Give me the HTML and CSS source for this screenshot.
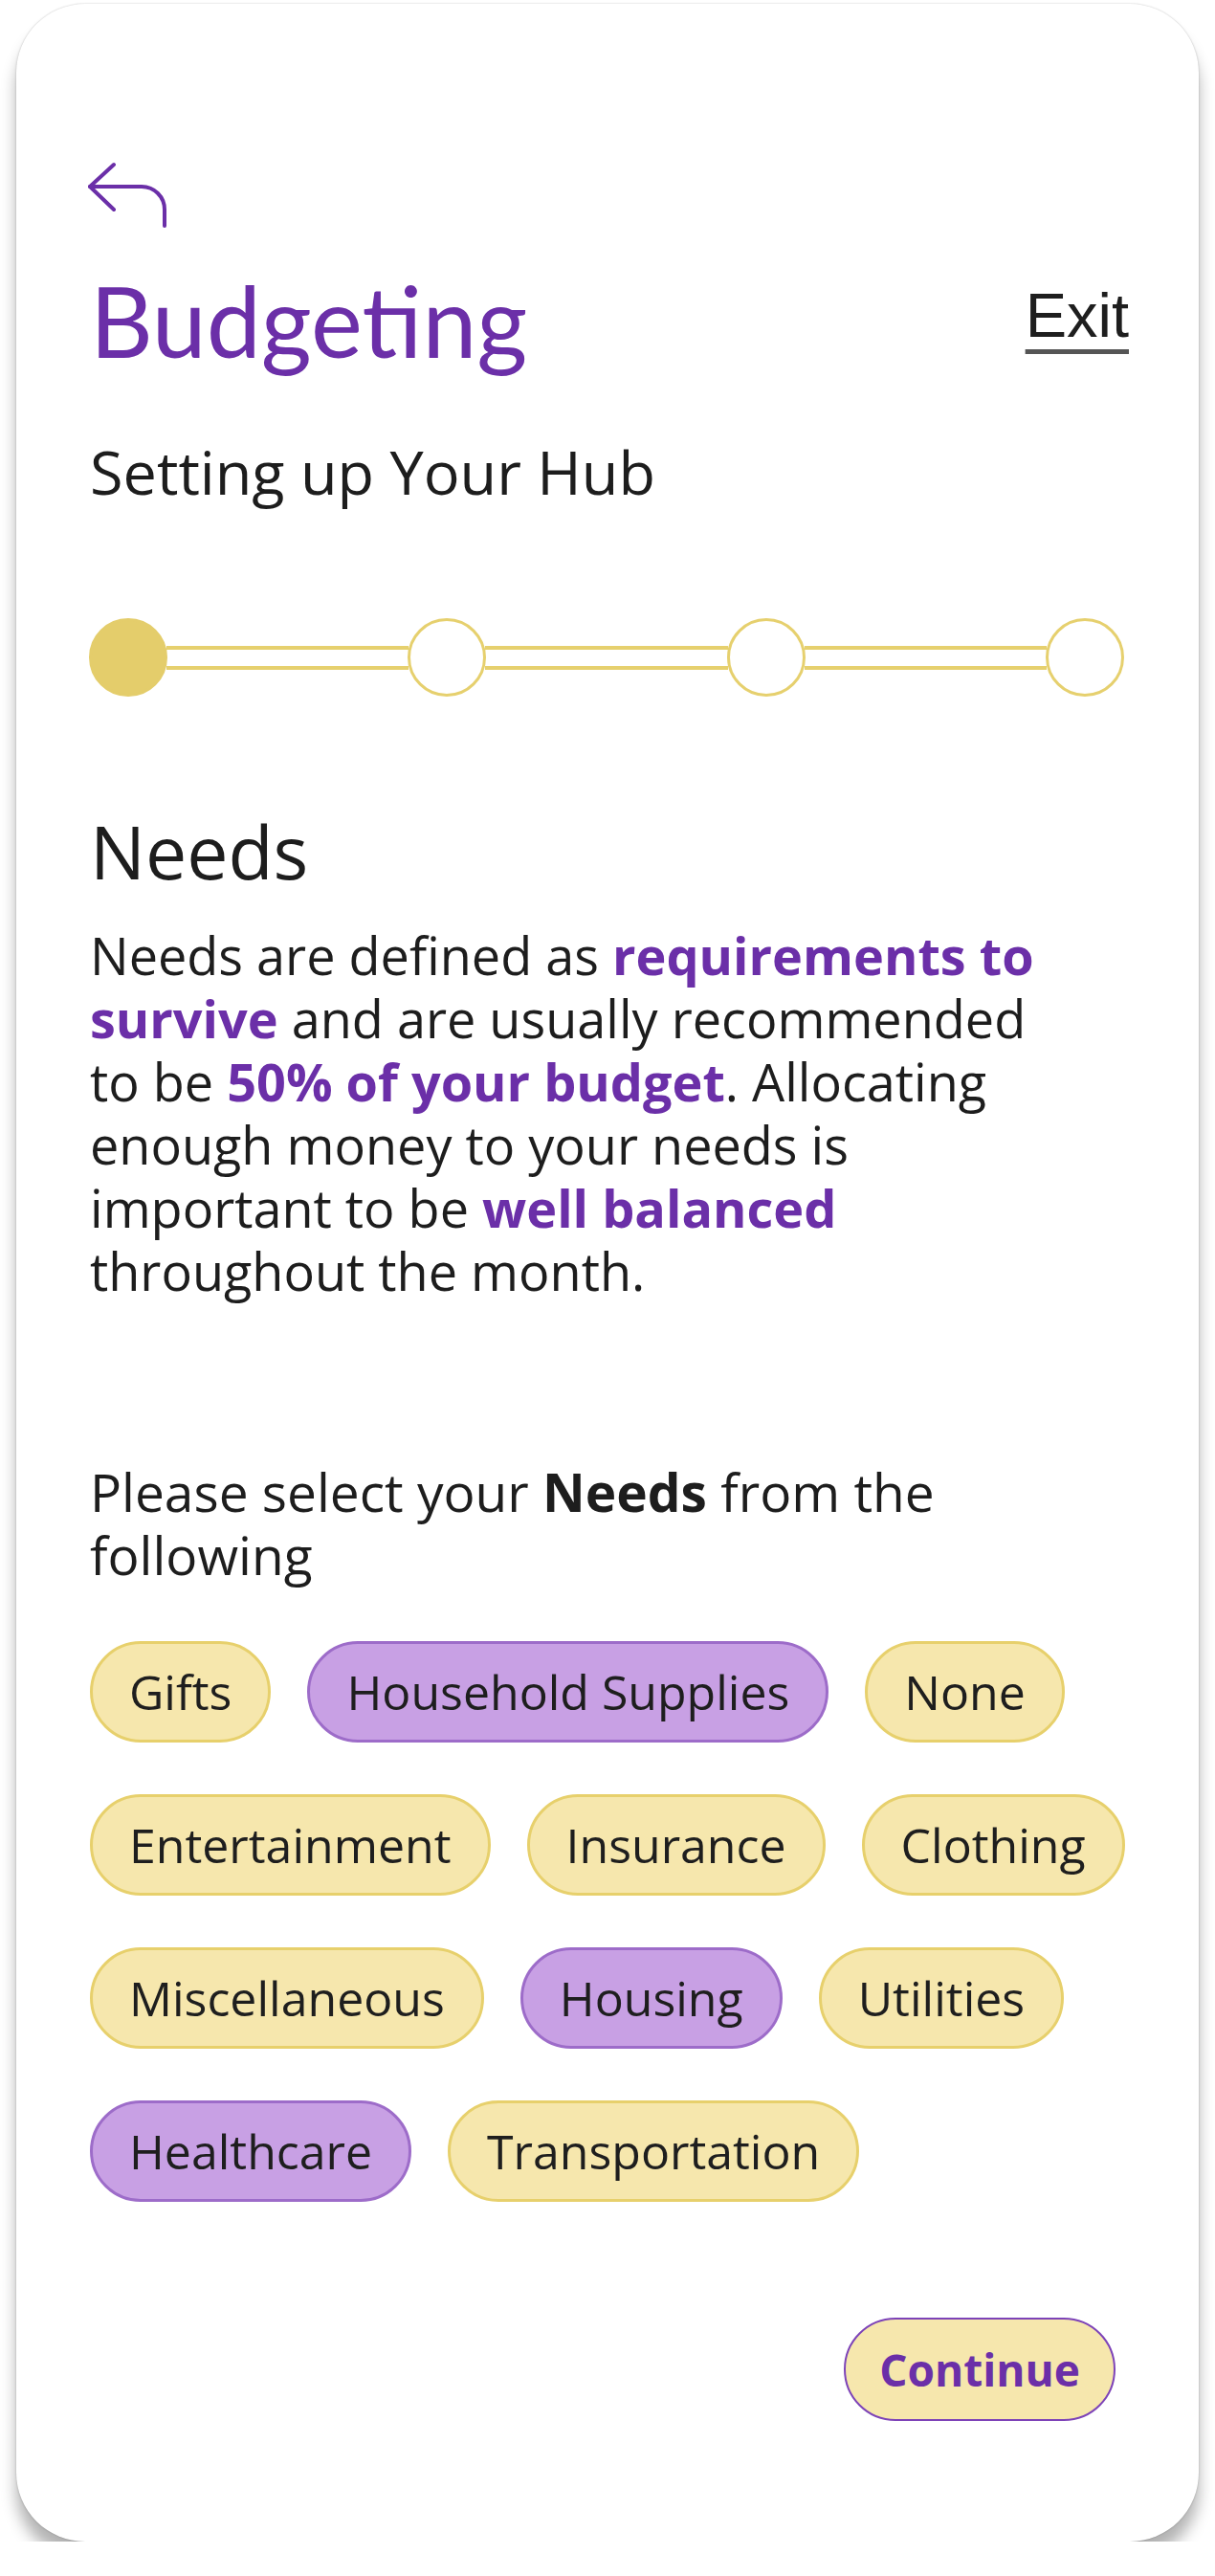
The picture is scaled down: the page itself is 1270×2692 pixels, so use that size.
FILE: index.html
```html
<!DOCTYPE html>
<html lang="en">
<head>
<meta charset="utf-8">
<title>Budgeting - Needs</title>
<link rel="stylesheet" href="styles.css">
</head>
<body>
<main class="card">
  <button class="back" aria-label="Back">
    <svg width="84" height="70" viewBox="0 0 84 70" fill="none" stroke="#6b2fa8" stroke-width="4" stroke-linecap="round" stroke-linejoin="round">
      <path d="M27 4 L2 27 L27 51"/>
      <path d="M2 27 H56 A24 24 0 0 1 80 51 V68"/>
    </svg>
  </button>
  <header class="head">
    <h1 class="title">Budgeting</h1>
    <a class="exit" href="#">Exit</a>
  </header>
  <p class="subtitle">Setting up Your Hub</p>
  <div class="stepper">
    <span class="dot dot-on"></span>
    <span class="bar"></span>
    <span class="dot"></span>
    <span class="bar"></span>
    <span class="dot"></span>
    <span class="bar"></span>
    <span class="dot"></span>
  </div>
  <h2 class="section">Needs</h2>
  <p class="text">Needs are defined as <b class="hl">requirements to survive</b> and are usually recommended to be <b class="hl">50% of your budget</b>. Allocating enough money to your needs is important to be <b class="hl">well balanced</b> throughout the month.</p>
  <p class="prompt">Please select your <b>Needs</b> from the following</p>
  <div class="chips">
    <span class="chip">Gifts</span>
    <span class="chip chip-on">Household Supplies</span>
    <span class="chip">None</span>
    <span class="chip">Entertainment</span>
    <span class="chip">Insurance</span>
    <span class="chip">Clothing</span>
    <span class="chip">Miscellaneous</span>
    <span class="chip chip-on">Housing</span>
    <span class="chip">Utilities</span>
    <span class="chip chip-on">Healthcare</span>
    <span class="chip">Transportation</span>
  </div>
  <div class="actions">
    <button class="continue">Continue</button>
  </div>
</main>
</body>
</html>
```

FILE: styles.css
```css
* { box-sizing: border-box; }
html, body { margin: 0; padding: 0; background: #ffffff; }
body {
  font-family: "Open Sans", "Noto Sans", sans-serif;
  color: #1d1d1d;
}
.card {
  margin: 4px 17px 0;
  background: #ffffff;
  border-radius: 72px;
  padding: 164px 75px 126px 77px;
  box-shadow: 0 0 2px rgba(0,0,0,0.25), 0 18px 16px rgba(0,0,0,0.3);
  display: flex;
  flex-direction: column;
}
.back {
  display: block;
  width: 84px;
  height: 70px;
  padding: 0;
  margin: 0 0 0 -2px;
  border: 0;
  background: none;
}
.back svg { display: block; }
.head {
  margin-top: 37px;
  display: flex;
  justify-content: space-between;
  align-items: center;
}
.title {
  margin: 0;
  font-family: "Lato", sans-serif;
  font-weight: 400;
  font-size: 102px;
  line-height: 120px;
  color: #6b2fa8;
}
.exit {
  font-family: "Liberation Sans", Arial, sans-serif;
  font-size: 65px;
  line-height: 74px;
  color: #1e1e1e;
  text-decoration: underline;
  text-decoration-color: #555555;
  text-decoration-thickness: 5px;
  text-underline-offset: 13px;
  margin-top: -10px;
  margin-right: -2px;
}
.subtitle {
  margin: 60px 0 0;
  font-size: 63px;
  line-height: 76px;
}
.stepper {
  margin-top: 115px;
  display: flex;
  align-items: center;
  width: 1082px;
  margin-left: -1px;
}
.dot {
  flex: none;
  width: 82px;
  height: 82px;
  border-radius: 50%;
  border: 3px solid #e6d06e;
  background: #ffffff;
}
.dot-on { background: #e4cd6b; border-color: #e4cd6b; }
.bar {
  flex: 1;
  height: 25px;
  border-top: 4px solid #e6d06e;
  border-bottom: 4px solid #e6d06e;
  margin: 0 -1px;
}
.section {
  margin: 116px 0 0;
  font-weight: 400;
  font-size: 77px;
  line-height: 92px;
}
.text {
  margin: 29px 0 0;
  font-size: 54px;
  line-height: 66px;
  max-width: 1020px;
}
.hl { color: #6b2fa8; font-weight: 700; }
.prompt {
  margin: 165px 0 0;
  font-size: 55px;
  line-height: 66px;
  max-width: 1040px;
}
.prompt b { font-weight: 700; }
.chips {
  margin-top: 57px;
  display: flex;
  flex-wrap: wrap;
  column-gap: 38px;
  row-gap: 54px;
  width: 1110px;
}
.chip {
  display: inline-block;
  padding: 19px 38px;
  font-size: 50px;
  line-height: 62px;
  border-radius: 60px;
  background: #f6e7ad;
  border: 3px solid #e7d06c;
  color: #1e1e1e;
}
.chip-on {
  background: #c8a0e4;
  border-color: #9d6cc9;
}
.actions {
  margin-top: 121px;
  display: flex;
  justify-content: flex-end;
}
.continue {
  font-family: "Open Sans", sans-serif;
  font-weight: 700;
  font-size: 46px;
  line-height: 60px;
  color: #6b2fa8;
  background: #f6e7ad;
  border: 2px solid #7d43b8;
  border-radius: 60px;
  padding: 22px 35px;
  margin-right: 12px;
}
```
